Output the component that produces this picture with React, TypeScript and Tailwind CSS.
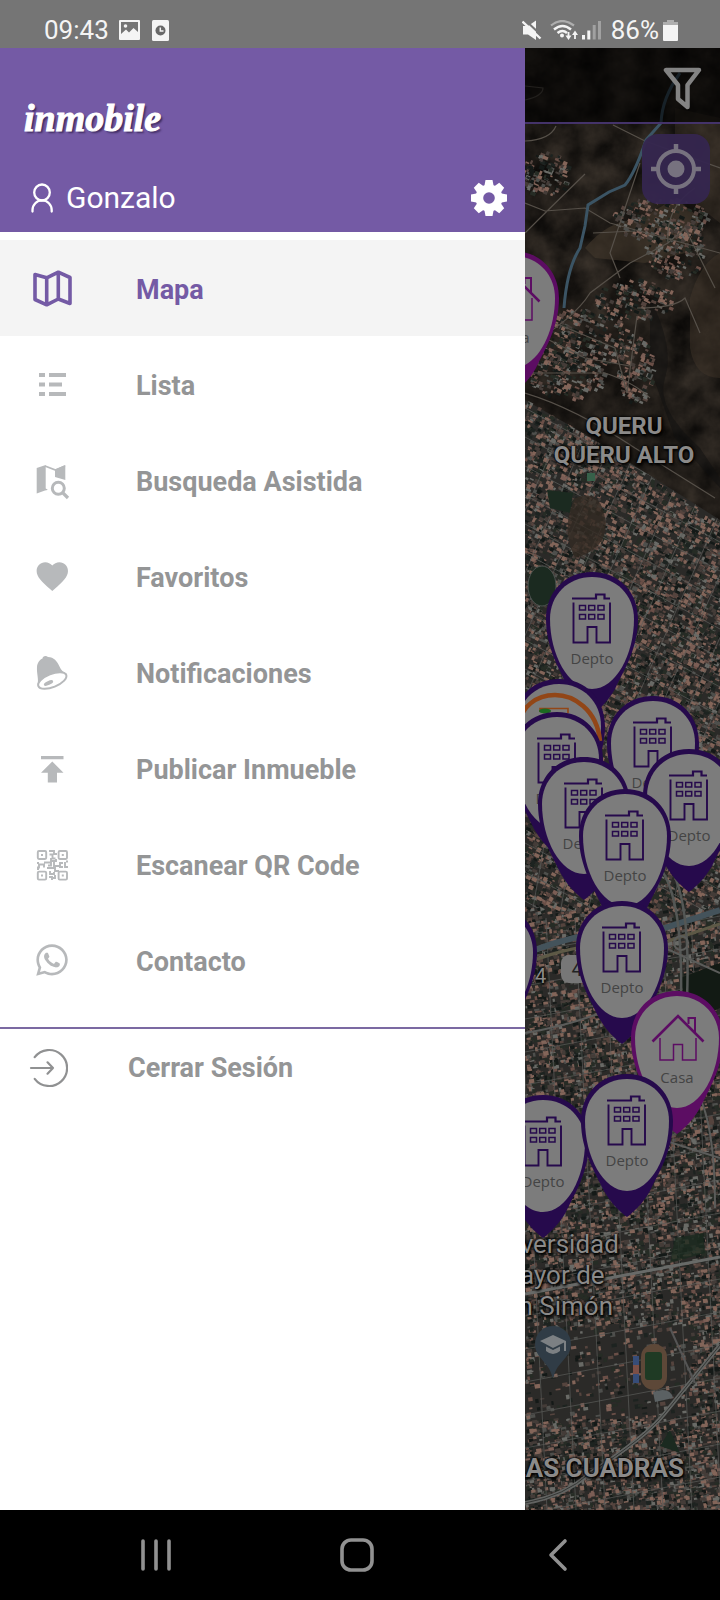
import type { ReactNode } from "react";
import { FaWhatsapp } from "react-icons/fa";

/* ---------- menu icons, all on a 40 x 40 grid ---------- */

function Glyph({ children }: { children: ReactNode }) {
  return (
    <svg viewBox="0 0 40 40" className="size-10 shrink-0" fill="currentColor" aria-hidden="true">
      {children}
    </svg>
  );
}

const MapGlyph = () => (
  <Glyph>
    <path
      d="M3 6.5 14.7 9.8 26.3 4.2 38 9.5V35.5L26.3 31 14.7 36.8 3 31.5ZM14.7 9.8V36.8M26.3 4.2V31"
      fill="none"
      stroke="currentColor"
      strokeWidth="3.6"
      strokeLinejoin="round"
    />
  </Glyph>
);

const ListGlyph = () => (
  <Glyph>
    <path d="M7 9h6v4H7zM17 9h17v4H17zM7 18.500h6v4H7zM17 18.500h13v4H17zM7 28h6v4H7zM17 28h17v4H17z" />
  </Glyph>
);

const SearchMapGlyph = () => (
  <Glyph>
    <path d="M4.700 8 13.700 5V28.500L15.500 29.500V30L13 30.500 4.700 33.500Z" />
    <path d="M23 9.500 33.300 5V20L23 17Z" />
    <path d="M13 6 23.500 10 33 6" fill="none" stroke="currentColor" strokeWidth="1.8" />
    <circle cx="26.300" cy="28.300" r="6" fill="none" stroke="currentColor" strokeWidth="3" />
    <path d="M30.500 32.500 36 38" stroke="currentColor" strokeWidth="3.2" />
  </Glyph>
);

const HeartGlyph = () => (
  <Glyph>
    <path
      transform="translate(1.5 1.6) scale(1.567)"
      d="M12 21.350l-1.450-1.320C5.400 15.360 2 12.280 2 8.500 2 5.420 4.420 3 7.500 3c1.740 0 3.410.81 4.500 2.090C13.090 3.810 14.760 3 16.500 3 19.580 3 22 5.420 22 8.500c0 3.780-3.400 6.860-8.550 11.540L12 21.350z"
    />
  </Glyph>
);

const BellGlyph = () => (
  <Glyph>
    <path d="M10.500 6.500C10.500 4 14 3 16 5 22 5.200 25 9 27.500 14.500 29 18 31.500 20.500 34.500 21.500L35 24 6 35 5.500 32C7 28 4.500 21 5 15 5.200 11 7.500 7.800 10.500 6.500Z" />
    <ellipse cx="20.300" cy="28.500" rx="15" ry="6.600" transform="rotate(-22 20.300 28.500)" fill="white" stroke="currentColor" strokeWidth="2" />
    <ellipse cx="16.500" cy="31" rx="5" ry="2" transform="rotate(-24 16.500 31)" />
  </Glyph>
);

const PublishGlyph = () => (
  <Glyph>
    <path d="M9 8h22.500v3.200H9zM20.300 13.500 31.500 24.800H25V34.500H15.800V24.800H9Z" />
  </Glyph>
);

const QrGlyph = () => (
  <Glyph>
    <g fill="none" stroke="currentColor" strokeWidth="1.9">
      <rect x="5.800" y="7" width="8.400" height="8" rx="1.200" />
      <rect x="26.600" y="7" width="8.400" height="8" rx="1.200" />
      <rect x="5.800" y="27.600" width="8.400" height="8" rx="1.200" />
      <rect x="26.600" y="27.600" width="8.400" height="8" rx="1.200" />
      <path d="M17 7h5v3h3M17.500 10.500h3v4h3M19 14v3h5v-2M5 23.500h2v-3h5v3M12 18.500h7v3h-3M22 18v4h6v-3h3M33 18v5h3M15 24h8v3h4M18 27v3h4v-2M17 33h3v3M23 31v3h-2M31 23h-4" />
    </g>
    <path d="M9 10h2v2H9zM29.800 10h2v2h-2zM9 30.600h2v2H9zM29.800 30.600h2v2h-2zM5 18h2v2H5zM34 16.500h2v2h-2zM5 24h2v2H5z" />
  </Glyph>
);

const LogoutGlyph = () => (
  <Glyph>
    <g fill="none" stroke="currentColor" strokeWidth="2.2" strokeLinecap="round" strokeLinejoin="round">
      <path d="M6.700 9.200A18 18 0 1 1 6.700 30.800" />
      <path d="M3 20H25M19.500 14.300 25 20 19.500 25.700" />
    </g>
  </Glyph>
);

const menu = [
  { label: "Mapa", icon: <MapGlyph />, active: true },
  { label: "Lista", icon: <ListGlyph /> },
  { label: "Busqueda Asistida", icon: <SearchMapGlyph /> },
  { label: "Favoritos", icon: <HeartGlyph /> },
  { label: "Notificaciones", icon: <BellGlyph /> },
  { label: "Publicar Inmueble", icon: <PublishGlyph /> },
  { label: "Escanear QR Code", icon: <QrGlyph /> },
  {
    label: "Contacto",
    icon: (
      <span className="flex size-10 items-center justify-center">
        <FaWhatsapp className="size-9" aria-hidden="true" />
      </span>
    ),
  },
];

/* ---------- status bar ---------- */

function StatusBar() {
  return (
    <header className="flex h-12 items-center bg-[#757575] pr-[42px] pl-11 pt-3 text-[26px] leading-9 text-[#f4f4f4]">
      <time>09:43</time>
      <svg viewBox="0 0 21 20" className="ml-2.5 h-5 w-[21px]" fill="currentColor" aria-hidden="true">
        <path fillRule="evenodd" d="M1 0H20Q21 0 21 1V19Q21 20 20 20H1Q0 20 0 19V1Q0 0 1 0ZM2 2V14L7 9.500 10 12.500 14.500 8 19 12V2Z" />
        <circle cx="6.500" cy="6" r="1.800" />
      </svg>
      <svg viewBox="0 0 17 21" className="ml-3 h-[21px] w-[17px]" aria-hidden="true">
        <rect width="17" height="21" rx="1.500" fill="currentColor" />
        <circle cx="8.500" cy="10.500" r="5" fill="#686868" />
        <path d="M8.300 7.500V11H11.500" fill="none" stroke="#f4f4f4" strokeWidth="1.500" />
      </svg>
      <svg viewBox="0 0 20 21" className="ml-auto h-[21px] w-5" aria-hidden="true">
        <path d="M1 6H6L14 0.500V20L6 14.500H1Z" fill="currentColor" />
        <path d="M2 -1 20 16" stroke="#757575" strokeWidth="2" />
        <path d="M0.500 1.500 18.500 18.500" stroke="currentColor" strokeWidth="2.400" />
      </svg>
      <svg viewBox="0 0 28 21" className="ml-2 h-[21px] w-7" fill="none" stroke="currentColor" aria-hidden="true">
        <path d="M1 5.500Q12 -3.500 24 5.500" strokeWidth="2.200" opacity="0.450" />
        <path d="M4 9.500Q12.500 2.500 21 9.500M7.500 13Q12.500 9 17 13" strokeWidth="2.500" />
        <circle cx="12" cy="15.500" r="2" fill="currentColor" stroke="none" />
        <path d="M18.500 12V17M25 19V14" strokeWidth="1.800" />
        <path d="M15.500 15.500H21.500L18.500 20ZM22 15H28L25 10.500Z" fill="currentColor" stroke="none" />
      </svg>
      <svg viewBox="0 0 19 20" className="ml-1 h-5 w-[19px]" fill="currentColor" aria-hidden="true">
        <path d="M0 15H3V19.500H0ZM5.300 10.500H8.300V19.500H5.300Z" />
        <path d="M10.700 5H13.700V19.500H10.700ZM16 1H19V19.500H16Z" opacity="0.350" />
      </svg>
      <span className="ml-2.5">86%</span>
      <svg viewBox="0 0 15 21" className="ml-1 h-[21px] w-[15px]" fill="currentColor" aria-hidden="true">
        <path d="M4 0H11V2H15V5H0V2H4Z" opacity="0.450" />
        <path d="M0 5H15V20Q15 21 14 21H1Q0 21 0 20Z" />
      </svg>
    </header>
  );
}

/* ---------- drawer ---------- */

function Drawer() {
  return (
    <aside className="z-10 flex w-[525px] shrink-0 flex-col bg-white">
      <div className="flex h-[184px] flex-col justify-between bg-[#745aa5] pt-[46px] pr-[18px] pb-3.5 pl-6 text-white">
        <p className="font-['Liberation_Serif',serif] text-[38px] leading-[48px] font-bold italic [-webkit-text-stroke:1px_white] [text-shadow:2px_2px_2px_#3e2b60]">
          inmobile
        </p>
        <div className="flex items-center justify-between">
          <div className="flex items-center text-[30px] leading-10">
            <svg viewBox="0 0 34 30" className="h-[30px] w-[34px]" fill="none" stroke="currentColor" strokeWidth="2.300" strokeLinecap="round" aria-hidden="true">
              <ellipse cx="18" cy="9.500" rx="7.800" ry="8" />
              <path d="M8.500 28.500V27A9.600 9.600 0 0 1 27.700 27V28.500" />
            </svg>
            <span className="ml-2">Gonzalo</span>
          </div>
          <button type="button" aria-label="Ajustes" className="size-9">
            <svg viewBox="-18 -18 36 36" className="size-9" fill="currentColor" aria-hidden="true">
              {[0, 45, 90, 135].map((a) => (
                <path key={a} transform={`rotate(${a})`} d="M-3.500 -18H3.500L5 -10V10L3.500 18H-3.500L-5 10V-10Z" />
              ))}
              <circle r="13.500" />
              <circle r="5.800" fill="#745aa5" />
            </svg>
          </button>
        </div>
      </div>

      <nav className="pt-2">
        <ul>
          {menu.map((m) => (
            <li key={m.label}>
              <a
                href="#"
                className={
                  m.active
                    ? "flex h-24 items-center gap-16 bg-[#f4f4f4] pl-8 text-[#745aa5]"
                    : "flex h-24 items-center gap-16 pl-8 text-[#b7b9bb]"
                }
              >
                {m.icon}
                <span className={m.active ? "pt-1 text-[27px] font-bold" : "pt-1 text-[27px] font-bold text-[#949596]"}>
                  {m.label}
                </span>
              </a>
            </li>
          ))}
        </ul>
      </nav>

      <div className="mt-[19px] border-t-2 border-[#7b69a2]">
        <button type="button" className="flex h-[78px] w-full items-center gap-[60px] pl-7 text-[#909192]">
          <LogoutGlyph />
          <span className="text-[27px] font-bold text-[#949596]">Cerrar Sesión</span>
        </button>
      </div>
    </aside>
  );
}

/* ---------- satellite map ---------- */

function makeRandom(seed: number) {
  let s = seed;
  return () => {
    s = (s * 1664525 + 1013904223) % 4294967296;
    return s / 4294967296;
  };
}

const roofColors = ["#6a4f47", "#7b5e55", "#55443e", "#4e4f4c", "#696a66", "#1d2320", "#141917", "#262c25", "#443c38", "#836559"];

const settlements = [
  [20, 125, 26, 22],
  [135, 170, 48, 22],
  [150, 200, 30, 30],
  [50, 290, 55, 30],
  [110, 320, 18, 35],
  [40, 325, 40, 25],
  [110, 250, 40, 20],
];

function buildRoofs() {
  const rnd = makeRandom(71);
  const out = roofColors.map(() => "");
  const place = (x: number, y: number, tilt: number) => {
    const i = Math.floor(rnd() * out.length);
    const w = 2 + rnd() * 3.500;
    const h = 1.500 + rnd() * 3;
    const c = Math.cos(tilt);
    const s = Math.sin(tilt);
    out[i] += `M${x.toFixed(1)} ${y.toFixed(1)}l${(w * c).toFixed(1)} ${(w * s).toFixed(1)}l${(-h * s).toFixed(1)} ${(h * c).toFixed(1)}l${(-w * c).toFixed(1)} ${(-w * s).toFixed(1)}z`;
  };
  for (let n = 0; n < 21000; n++) {
    const x = rnd() * 195;
    const y = 330 + rnd() * 1135;
    const edge = x < 60 ? 350 + x * 0.600 : 386 + (x - 60) * 0.650;
    if (y < edge) continue;
    const campus = x > 5 && x < 165 && y > 1275 && y < 1370;
    if (campus && rnd() < 0.800) continue;
    if (x > 150 && y > 930 && y < 985 && rnd() < 0.850) continue;
    place(x, y, y < 860 ? 0.450 : -0.150);
  }
  for (const [cx, cy, rx, ry] of settlements) {
    for (let n = 0; n < rx * ry * 0.200; n++) {
      const a = rnd() * 6.283;
      const r = Math.sqrt(rnd());
      place(cx + Math.cos(a) * r * rx, cy + Math.sin(a) * r * ry, 0.400);
    }
  }
  return out;
}

const roofs = buildRoofs();

function buildStreets() {
  let d = "";
  for (let i = 0; i < 20; i++) {
    const y = 300 + i * 29;
    d += `M0 ${y + 60}L195 ${y + 165}`;
  }
  for (let i = 0; i < 12; i++) {
    const x = i * 28;
    d += `M${x} 400L${x - 130} 690L${x - 160} 860`;
  }
  return d;
}

function buildLowerStreets() {
  let d = "";
  for (let i = 0; i < 20; i++) d += `M0 ${905 + i * 33}L195 ${868 + i * 33}`;
  for (let i = 0; i < 8; i++) d += `M${i * 29 - 8} 870L${i * 29 + 22} 1462`;
  return d;
}

function Satellite() {
  return (
    <svg viewBox="0 0 195 1462" preserveAspectRatio="xMinYMin slice" className="absolute inset-0 h-full w-full" aria-hidden="true">
      <defs>
        <filter id="terrain" x="0" y="0" width="100%" height="100%" colorInterpolationFilters="sRGB">
          <feTurbulence type="fractalNoise" baseFrequency="0.035" numOctaves="5" seed="4" />
          <feColorMatrix values="0.24 0 0 0 0.01  0.21 0 0 0 0.008  0.18 0 0 0 0.006  0 0 0 0 1" />
        </filter>
        <clipPath id="lower">
          <path d="M0 860H195V1462H0Z" />
        </clipPath>
        <clipPath id="upper">
          <path d="M0 352 60 386 195 472V860H0Z" />
        </clipPath>
      </defs>
      <rect width="195" height="1462" fill="#211d1a" />
      <rect width="195" height="1462" filter="url(#terrain)" />
      <path d="M60 200Q85 170 115 172L150 150 175 170 160 205 120 215 70 210Z" fill="#463a2e" opacity="0.550" />
      <path d="M150 60 195 70V175L150 140Z" fill="#463a2e" opacity="0.350" />
      <path d="M165 250Q175 215 195 205V330Q170 330 165 300Z" fill="#463a2e" opacity="0.400" />
      <path d="M125 250Q150 300 140 330T175 400L195 430V440L150 390 125 320Z" fill="#0f100f" opacity="0.500" />
      <path d="M0 352 60 386 195 472V1462H0Z" fill="#2b2a28" />
      {roofs.map((d, i) => (
        <path key={roofColors[i]} d={d} fill={roofColors[i]} />
      ))}
      <g fill="none" stroke="#5b5c5a">
        <path d={buildStreets()} clipPath="url(#upper)" opacity="0.700" />
        <path d={buildLowerStreets()} clipPath="url(#lower)" opacity="0.700" />
        <g stroke="#565049" strokeWidth="1.200">
          <path d="M0 52Q18 48 18 40L0 38M0 93Q25 92 31 78M88 77 120 93 195 120M60 126Q25 160 0 185M0 155 20 163 60 160 85 175 195 205M115 115 85 205 95 230M68 185 110 183M0 300Q50 270 65 245Q85 230 105 215L143 195 160 180 190 240M143 195Q140 160 170 140M112 268 102 345 90 300 30 275M112 260Q150 260 160 250L175 285" />
          <path d="M0 325 80 325Q110 335 125 350M0 345Q50 360 110 400L150 425 190 450M20 290 60 310 105 318" />
        </g>
      </g>
      <path d="M155 25Q137 50 136 75L121 92Q110 125 100 137L84 144 63 157 60 178 55 200Q42 220 39 260" fill="none" stroke="#3b5464" strokeWidth="3" />
      <ellipse cx="17" cy="538" rx="14" ry="20" fill="#1b2a20" stroke="#4d5350" />
      <path d="M22 442 48 445 45 465 25 460Z" fill="#1b2a20" />
      <path d="M62 425h8v8h-8z" fill="#37614a" />
      <path d="M50 450Q75 440 80 470T50 510Q35 480 50 450Z" fill="#332b23" opacity="0.800" />
      <path d="M155 930 195 915V960L165 975Z" fill="#121a14" />
      <g fill="none">
        <path d="M0 906Q60 880 130 883L195 862" stroke="#44535b" strokeWidth="6" />
        <path d="M0 916Q60 890 135 896L195 876" stroke="#5d5946" strokeWidth="3" />
        <path d="M135 820Q158 850 156 950M143 815Q166 850 162 950" stroke="#545755" strokeWidth="2.500" />
        <path d="M140 900 195 925M0 985Q60 975 110 950M165 1035Q190 1060 190 1160M100 1080 195 1110" stroke="#5b5c5a" strokeWidth="2" />
        <circle cx="156" cy="895" r="7" stroke="#5b5c5a" strokeWidth="2" />
        <path d="M0 1246 90 1229 195 1209" stroke="#686a68" strokeWidth="3" />
        <path d="M0 1455Q40 1448 65 1425Q120 1390 140 1365L195 1297" stroke="#626462" strokeWidth="4" />
        <path d="M0 1455Q40 1448 65 1425Q120 1390 140 1365L195 1297" stroke="#343634" />
        <path d="M145 1280 170 1335" stroke="#555" strokeWidth="2" />
      </g>
      <path d="M150 1190 178 1185 180 1205 145 1215Z" fill="#1c2b1f" opacity="0.800" />
      <path d="M145 1382 155 1405 135 1398Z" fill="#1b2a20" />
      <rect x="116" y="1296" width="26" height="46" rx="13" fill="#5d4838" />
      <rect x="120" y="1304" width="17" height="28" rx="3" fill="#1f3a24" />
      <path d="M108 1308h6v9h-6zM108 1326h6v9h-6z" fill="#374d78" />
      <path d="M108 1317h6v9h-6z" fill="#7c4f46" />
      <path d="M128 1344Q145 1338 148 1350L130 1354Z" fill="#5b6163" />
    </svg>
  );
}

type PinProps = { kind?: "depto" | "casa" | "oferta" };

function Pin({ kind = "depto" }: PinProps) {
  const color = kind === "casa" ? "#5c0d63" : "#260a4c";
  return (
    <svg viewBox="0 0 92 143" className="block h-[143px] w-[92px]" aria-hidden="true">
      <path d="M46 0C73 0 92 20 92 47C92 77 77 100 69 117C62 129 54 137 46 143C38 137 30 129 23 117C15 100 0 77 0 47C0 20 19 0 46 0Z" fill={color} />
      <path d="M46 5C70 5 88 23 88 47C88 82 70 117 46 117C22 117 4 82 4 47C4 23 22 5 46 5Z" fill="#7c7c7c" />
      {kind === "depto" && (
        <g fill="none" stroke={color} strokeWidth="1.900">
          <path d="M26 26.500H50V22.500H58.500V26.500H64" strokeWidth="2.200" />
          <path d="M27.500 30.500V70.500H41.500V55H50.500V70.500H64V30.500" />
          <path d="M33.500 33.500h6v4.500h-6zM42.700 33.500h6v4.500h-6zM52 33.500h6v4.500h-6zM33.500 42.500h6v4.500h-6zM42.700 42.500h6v4.500h-6zM52 42.500h6v4.500h-6z" strokeWidth="1.500" />
        </g>
      )}
      {kind === "casa" && (
        <g fill="none" stroke={color}>
          <path d="M21.500 50.500 47 25 72.500 50.500" strokeWidth="2.600" />
          <path d="M57.500 33V27H64V41.500" strokeWidth="2" />
          <path d="M29 47V69H42.500V53.500H51.500V69H65V47" strokeWidth="1.500" />
        </g>
      )}
      {kind === "oferta" && (
        <>
          <path d="M5 50C7 27 24 16 42 16S84 30 87 62" fill="none" stroke="#924617" strokeWidth="4.500" />
          <path d="M27 33V29.500H55V34" fill="none" stroke="#924617" strokeWidth="1.600" />
          <ellipse cx="32" cy="32" rx="6" ry="2.500" fill="#1c6a22" />
        </>
      )}
      {kind !== "oferta" && (
        <text x="46" y="92" textAnchor="middle" fontSize="15" fill="#444444" className="font-['Open_Sans',sans-serif]">
          {kind === "casa" ? "Casa" : "Depto"}
        </text>
      )}
    </svg>
  );
}

function MapView() {
  const outlined = "[text-shadow:0_0_3px_#000,0_0_3px_#000,1px_2px_3px_#000]";
  return (
    <main className="relative min-w-0 flex-1 overflow-hidden bg-[#211d1a] text-[#8b8a89]">
      <Satellite />

      {/* place names */}
      <p className={`absolute top-[364px] left-[99px] -translate-x-1/2 text-center text-[24px] leading-[29px] font-bold whitespace-nowrap ${outlined}`}>
        QUERU
        <br />
        QUERU ALTO
      </p>
      <p className={`absolute top-[1181px] left-[26px] -translate-x-1/2 text-center text-[26px] leading-[31px] whitespace-nowrap ${outlined}`}>
        Universidad
        <br />
        Mayor de
        <br />
        San Simón
      </p>
      <p className={`absolute top-[1405px] right-9 text-[26px] leading-[31px] font-bold whitespace-nowrap ${outlined}`}>
        LAS CUADRAS
      </p>
      <svg viewBox="0 0 36 52" className="absolute top-[1278px] left-[10px] h-[52px] w-9" aria-hidden="true">
        <path d="M18 0A18 18 0 0 1 36 18C36 32 22 36 19 50Q18 53 17 50C14 36 0 32 0 18A18 18 0 0 1 18 0Z" fill="#303c46" />
        <path d="M5 15 18 9 31 15V25H29V16.500L18 22ZM11 20.500V25Q18 31 25 25V20.500L18 24Z" fill="#7c8083" />
      </svg>
      <span className={`absolute top-[914px] left-[10px] text-[20px] leading-7 ${outlined}`}>4</span>
      <span className="absolute top-[907px] left-[36px] flex h-7 w-8 items-center justify-center rounded-lg bg-[#777] text-[20px] text-[#222]">4</span>

      {/* property pins, back to front */}
      <div className="absolute top-[203px] left-[-58px]"><Pin kind="casa" /></div>
      <div className="absolute top-[524px] left-[21px]"><Pin /></div>
      <div className="absolute top-[631px] left-[-12px]"><Pin kind="oferta" /></div>
      <div className="absolute top-[648px] left-[82px]"><Pin /></div>
      <div className="absolute top-[664px] left-[-14px]"><Pin /></div>
      <div className="absolute top-[701px] left-[118px]"><Pin /></div>
      <div className="absolute top-[709px] left-[13px]"><Pin /></div>
      <div className="absolute top-[741px] left-[54px]"><Pin /></div>
      <div className="absolute top-[857px] left-[-80px]"><Pin /></div>
      <div className="absolute top-[853px] left-[51px]"><Pin /></div>
      <div className="absolute top-[943px] left-[106px]"><Pin kind="casa" /></div>
      <div className="absolute top-[1047px] left-[-28px]"><Pin /></div>
      <div className="absolute top-[1026px] left-[56px]"><Pin /></div>

      {/* map controls */}
      <div className="relative flex h-[76px] items-center justify-end border-b-2 border-[#44336a] bg-black/60 pr-[18px] pt-2">
        <button type="button" aria-label="Filtrar" className="h-11 w-[39px]">
          <svg viewBox="0 0 39 44" className="h-11 w-[39px]" fill="none" stroke="#838383" strokeWidth="4.500" strokeLinejoin="round" aria-hidden="true">
            <path d="M3 3H36L24.500 18V40L15 32V18Z" />
          </svg>
        </button>
      </div>
      <div className="relative flex justify-end pt-2.5 pr-2.5">
        <button type="button" aria-label="Mi ubicación" className="flex h-[70px] w-[68px] items-center justify-center rounded-2xl bg-[#35264f]/95">
          <svg viewBox="-25 -25 50 50" className="size-[50px]" aria-hidden="true">
            <circle r="18" fill="none" stroke="#77727f" strokeWidth="4" />
            <circle r="8.500" fill="#77727f" />
            <path d="M0 -25V-16M0 25V16M-25 0H-16M25 0H16" stroke="#77727f" strokeWidth="4.500" />
          </svg>
        </button>
      </div>
    </main>
  );
}

/* ---------- system navigation ---------- */

function SystemNav() {
  return (
    <footer className="grid h-[90px] grid-cols-3 items-center bg-black pr-[61px] pl-[55px] text-[#919191]">
      <button type="button" aria-label="Recientes" className="flex justify-center">
        <svg viewBox="0 0 32 34" className="h-[34px] w-8" fill="none" stroke="currentColor" strokeWidth="3.600" strokeLinecap="round" aria-hidden="true">
          <path d="M3 3V31M16 3V31M29 3V31" />
        </svg>
      </button>
      <button type="button" aria-label="Inicio" className="flex justify-center">
        <svg viewBox="0 0 34 34" className="size-[34px]" fill="none" stroke="currentColor" strokeWidth="3.600" aria-hidden="true">
          <rect x="2" y="2" width="30" height="30" rx="9" />
        </svg>
      </button>
      <button type="button" aria-label="Atrás" className="flex justify-center">
        <svg viewBox="0 0 20 34" className="h-[34px] w-5" fill="none" stroke="currentColor" strokeWidth="3.600" strokeLinecap="round" strokeLinejoin="round" aria-hidden="true">
          <path d="M17 3 3 17 17 31" />
        </svg>
      </button>
    </footer>
  );
}

export default function App() {
  return (
    <div className="flex min-h-screen flex-col bg-black font-[Roboto,sans-serif]">
      <StatusBar />
      <div className="flex flex-1">
        <Drawer />
        <MapView />
      </div>
      <SystemNav />
    </div>
  );
}
